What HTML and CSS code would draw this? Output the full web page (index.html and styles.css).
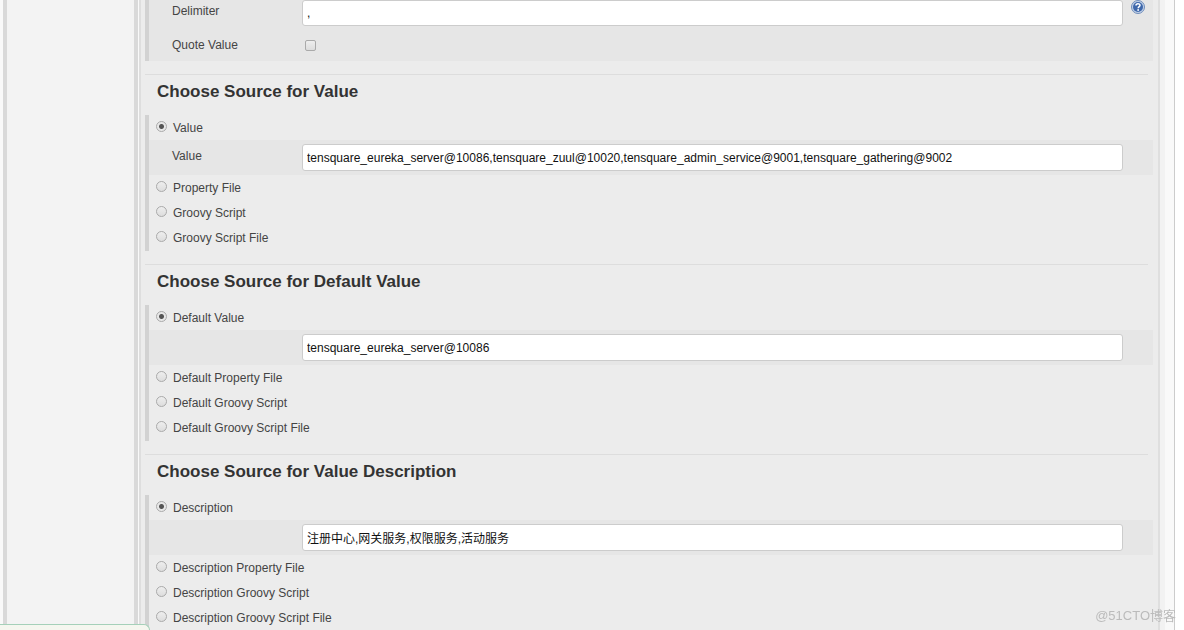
FILE: index.html
```html
<!DOCTYPE html>
<html lang="en">
<head>
<meta charset="utf-8">
<title>Parameter configuration</title>
<link rel="stylesheet" href="styles.css">
</head>
<body>
<div class="page">
  <aside class="side"></aside>
  <main class="config">
    <form class="form">
      <div class="block block-top">
        <div class="field">
          <label for="delimiter">Delimiter</label>
          <input class="text" id="delimiter" type="text" value=",">
          <button class="help" type="button" aria-label="Help for Delimiter">
            <svg width="14" height="14" viewBox="0 0 14 14">
              <circle cx="7" cy="7" r="6.5" fill="#c3d2e8" stroke="#6f8dbb"/>
              <circle cx="7" cy="7" r="5" fill="#3f68ab"/>
              <path d="M5 5.4C5 3.3 9 3.2 9 5.3C9 6.7 7.2 6.6 7.2 8.3" fill="none" stroke="#fff" stroke-width="1.5"/>
              <rect x="6.3" y="9.2" width="1.7" height="1.6" fill="#fff"/>
            </svg>
          </button>
        </div>
        <div class="field">
          <label for="quote">Quote Value</label>
          <input class="check" id="quote" type="checkbox">
        </div>
      </div>

      <section class="source">
        <h2>Choose Source for Value</h2>
        <div class="block">
          <label class="choice"><input type="radio" name="value-source" checked>Value</label>
          <div class="field field-sub">
            <label for="value">Value</label>
            <input class="text" id="value" type="text" value="tensquare_eureka_server@10086,tensquare_zuul@10020,tensquare_admin_service@9001,tensquare_gathering@9002">
          </div>
          <label class="choice"><input type="radio" name="value-source">Property File</label>
          <label class="choice"><input type="radio" name="value-source">Groovy Script</label>
          <label class="choice"><input type="radio" name="value-source">Groovy Script File</label>
        </div>
      </section>

      <section class="source">
        <h2>Choose Source for Default Value</h2>
        <div class="block">
          <label class="choice"><input type="radio" name="default-source" checked>Default Value</label>
          <div class="field field-sub">
            <input class="text" type="text" aria-label="Default Value" value="tensquare_eureka_server@10086">
          </div>
          <label class="choice"><input type="radio" name="default-source">Default Property File</label>
          <label class="choice"><input type="radio" name="default-source">Default Groovy Script</label>
          <label class="choice"><input type="radio" name="default-source">Default Groovy Script File</label>
        </div>
      </section>

      <section class="source">
        <h2>Choose Source for Value Description</h2>
        <div class="block">
          <label class="choice"><input type="radio" name="description-source" checked>Description</label>
          <div class="field field-sub">
            <input class="text" type="text" aria-label="Description" value="注册中心,网关服务,权限服务,活动服务">
          </div>
          <label class="choice"><input type="radio" name="description-source">Description Property File</label>
          <label class="choice"><input type="radio" name="description-source">Description Groovy Script</label>
          <label class="choice"><input type="radio" name="description-source">Description Groovy Script File</label>
        </div>
      </section>
    </form>
  </main>
  <div class="gutter"></div>
</div>
<div class="status"></div>
<div class="watermark">@51CTO博客</div>
</body>
</html>
```
FILE: styles.css
```css
* {
  box-sizing: border-box;
}

body {
  margin: 0;
  background: #fff;
  color: #444;
  font: 12px/16px "Liberation Sans", "Noto Sans CJK SC", sans-serif;
}

.page {
  display: flex;
  min-height: 100vh;
  margin-right: 9px;
  padding-left: 3px;
  border-right: 1px solid #ccc;
  background: #f9f9f9;
}

.side {
  flex: none;
  width: 135px;
  border: solid #d9d9d9;
  border-width: 0 4px;
  background: #f3f3f3;
}

.config {
  flex: 1;
  min-width: 0;
  padding-left: 4px;
  border-right: 2px solid #dfdfdf;
  border-left: 2px solid #dedede;
  margin-left: 1px;
  background: #ececec;
}

.gutter {
  flex: none;
  width: 5px;
  margin-right: 9px;
  background: #f2f2f2;
}

.form {
  margin-right: 5px;
}

.block {
  border-left: 4px solid #d2d2d2;
  padding-bottom: 1px;
}

.block-top {
  padding-bottom: 7px;
  background: #e6e6e6;
}

.field {
  display: grid;
  grid-template-columns: 130px minmax(0, 1fr) 30px;
  padding-left: 23px;
}

.block-top .field {
  height: 27px;
}

.block-top label {
  padding-top: 3px;
}

.block-top .field + .field {
  padding-top: 7px;
}

.field-sub {
  padding-top: 4px;
  padding-bottom: 4px;
  background: #e6e6e6;
}

.field-sub label {
  padding-top: 4px;
}

.text {
  grid-column: 2;
  width: 100%;
  height: 27px;
  padding: 0 4px;
  border: 1px solid #ccc;
  border-radius: 3px;
  background: #fff;
  color: #111;
  font: inherit;
}

.block-top .text {
  height: 26px;
}

.help {
  width: 14px;
  height: 14px;
  margin-left: 8px;
  padding: 0;
  border: 0;
  background: none;
}

.help svg {
  display: block;
}

.check,
.choice input {
  appearance: none;
  width: 11px;
  height: 11px;
  margin: 0;
  border: 1px solid #aaa;
  background: linear-gradient(#eee, #ddd);
}

.check {
  margin: 6px 3px 0;
  border-radius: 2px;
}

.choice {
  display: flex;
  gap: 6px;
  height: 25px;
  padding: 5px 0 0 7px;
}

.choice input {
  margin-top: 1px;
  border-radius: 50%;
}

.choice input:checked {
  background: radial-gradient(circle, #555 0 2px, #e8e8e8 3px);
}

.source {
  margin-top: 13px;
}

.source h2 {
  height: 41px;
  margin: 0 5px 0 0;
  padding: 7px 12px 0;
  border-top: 1px solid #ddd;
  color: #333;
  font-size: 17px;
  line-height: 20px;
}

.status {
  position: fixed;
  bottom: 0;
  left: 0;
  width: 150px;
  height: 6px;
  border-top: 1px solid #a5d0b9;
  border-right: 1px solid #a5d0b9;
  border-radius: 0 6px 0 0;
  background: #f5f6ef;
}

.watermark {
  position: fixed;
  right: 8px;
  bottom: 6px;
  color: #bbb;
  font-size: 13px;
}
```
